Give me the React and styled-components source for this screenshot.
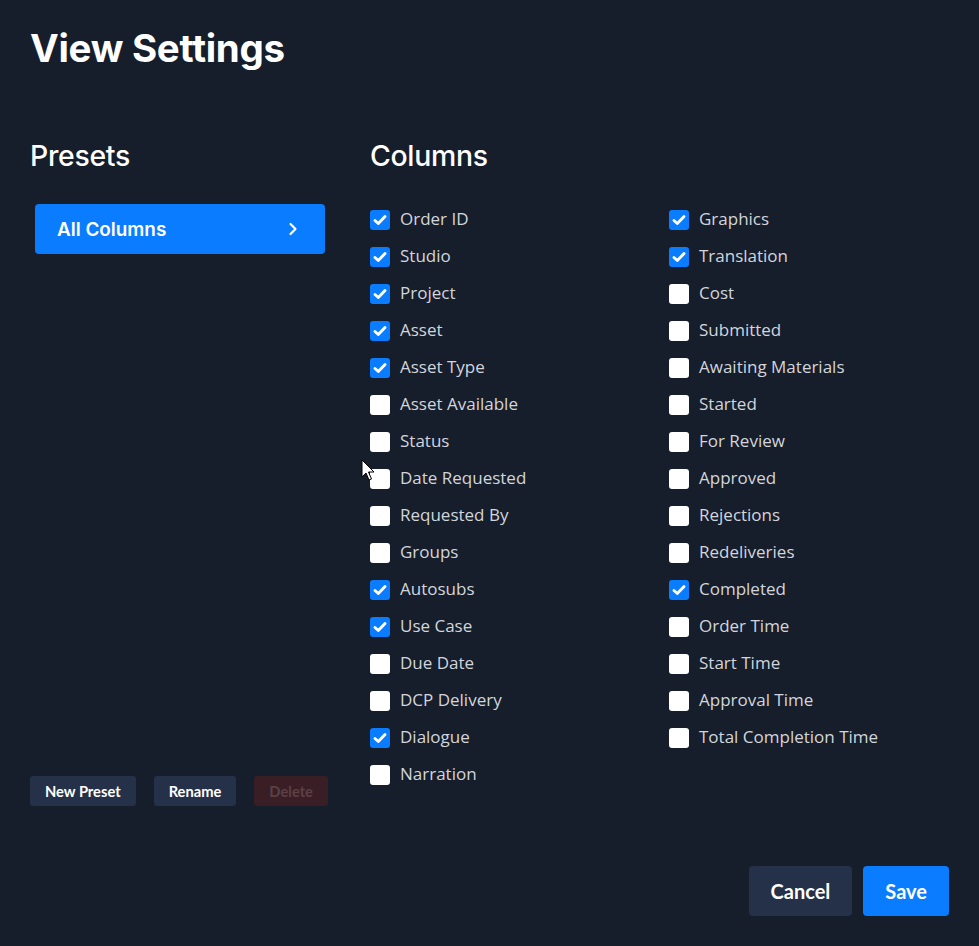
import React from "react"
import styled, { createGlobalStyle } from "styled-components"
import { ChevronRight } from "lucide-react"

const GlobalStyle = createGlobalStyle`
  html, body {
    margin: 0;
    padding: 0;
    background: #161d2b;
  }
  body {
    font-family: "Open Sans", "Noto Sans", sans-serif;
    color: #ffffff;
  }
`

const columnsA = [
  ["Order ID", true],
  ["Studio", true],
  ["Project", true],
  ["Asset", true],
  ["Asset Type", true],
  ["Asset Available", false],
  ["Status", false],
  ["Date Requested", false],
  ["Requested By", false],
  ["Groups", false],
  ["Autosubs", true],
  ["Use Case", true],
  ["Due Date", false],
  ["DCP Delivery", false],
  ["Dialogue", true],
  ["Narration", false],
]

const columnsB = [
  ["Graphics", true],
  ["Translation", true],
  ["Cost", false],
  ["Submitted", false],
  ["Awaiting Materials", false],
  ["Started", false],
  ["For Review", false],
  ["Approved", false],
  ["Rejections", false],
  ["Redeliveries", false],
  ["Completed", true],
  ["Order Time", false],
  ["Start Time", false],
  ["Approval Time", false],
  ["Total Completion Time", false],
]

const Page = styled.div`
  position: relative;
  width: 979px;
  height: 946px;
  box-sizing: border-box;
  padding: 24px 30px 0 30px;
  background: #161d2b;
  overflow: hidden;
`

const Title = styled.h1`
  margin: 0;
  font-family: Inter, "Noto Sans", sans-serif;
  font-weight: 700;
  font-size: 38.5px;
  line-height: 48px;
  letter-spacing: -0.3px;
  color: #ffffff;
`

const Body = styled.div`
  display: grid;
  grid-template-columns: 300px 1fr;
  gap: 40px;
  margin-top: 64px;
`

const Heading = styled.h2`
  margin: 0 0 24px 0;
  font-family: Inter, "Noto Sans", sans-serif;
  font-weight: 500;
  font-size: 28.4px;
  line-height: 40px;
  letter-spacing: -0.3px;
  color: #ffffff;
`

const PresetPanel = styled.section`
  display: flex;
  flex-direction: column;
`

const PresetItem = styled.button`
  display: flex;
  align-items: center;
  justify-content: space-between;
  margin: 4px 5px 0 5px;
  height: 50px;
  padding: 0 22px;
  border: 0;
  border-radius: 4px;
  background: ${p => (p.active ? "#0a7cff" : "transparent")};
  color: #ffffff;
  font-family: Inter, "Noto Sans", sans-serif;
  font-weight: 600;
  font-size: 18.9px;
  cursor: pointer;
`

const PresetActions = styled.div`
  display: flex;
  gap: 18px;
  margin-top: auto;
  margin-bottom: -14px;
`

const SmallButton = styled.button`
  height: 30px;
  padding: 0 15px;
  border: 0;
  border-radius: 3px;
  white-space: nowrap;
  background: ${p => (p.danger ? "#3a1e25" : "#253149")};
  color: ${p => (p.danger ? "#5b4046" : "#ffffff")};
  font-family: Lato, "Noto Sans", sans-serif;
  font-weight: 700;
  font-size: 14.7px;
`

const ColumnsPanel = styled.section``

const ColumnGrid = styled.div`
  display: grid;
  grid-template-columns: 299px 1fr;
  grid-template-rows: repeat(16, 37px);
  grid-auto-flow: column;
`

const CheckRow = styled.label`
  display: flex;
  align-items: center;
  gap: 10px;
  height: 37px;
  color: #d2d6dc;
  font-family: "Open Sans", "Noto Sans", sans-serif;
  font-size: 17px;
  cursor: pointer;
`

const Box = styled.span`
  display: inline-flex;
  align-items: center;
  justify-content: center;
  width: 20px;
  height: 20px;
  flex: none;
  border-radius: 3px;
  background: ${p => (p.checked ? "#0a7cff" : "#ffffff")};
  margin-top: 2px;
`

const Footer = styled.div`
  display: flex;
  justify-content: flex-end;
  gap: 11px;
  margin-top: 74px;
`

const FooterButton = styled.button`
  height: 50px;
  padding: 0 22px;
  border: 0;
  border-radius: 4px;
  background: ${p => (p.primary ? "#0a7cff" : "#253149")};
  color: #ffffff;
  font-family: Lato, "Noto Sans", sans-serif;
  font-weight: 700;
  font-size: 20px;
`

const Pointer = styled.svg`
  position: absolute;
  left: 361px;
  top: 459px;
  pointer-events: none;
`

const Check = ({ checked }) => (
  <Box checked={checked}>
    {checked && (
      <svg width="16" height="16" viewBox="0 0 14 14">
        <path
          d="M2.6 7.4 L5.5 10.1 L11.4 3.9"
          fill="none"
          stroke="#ffffff"
          strokeWidth="2.5"
          strokeLinecap="round"
          strokeLinejoin="round"
        />
      </svg>
    )}
  </Box>
)

const App = () => {
  const items = [...columnsA, ...columnsB]
  return (
    <>
      <GlobalStyle />
      <Page>
        <Title>View Settings</Title>
        <Body>
          <PresetPanel>
            <Heading>Presets</Heading>
            <PresetItem active>
              <span>All Columns</span>
              <ChevronRight size={20} strokeWidth={2.6} />
            </PresetItem>
            <PresetActions>
              <SmallButton>New Preset</SmallButton>
              <SmallButton>Rename</SmallButton>
              <SmallButton danger disabled>
                Delete
              </SmallButton>
            </PresetActions>
          </PresetPanel>
          <ColumnsPanel>
            <Heading>Columns</Heading>
            <ColumnGrid>
              {items.map(([label, checked]) => (
                <CheckRow key={label}>
                  <Check checked={checked} />
                  {label}
                </CheckRow>
              ))}
            </ColumnGrid>
          </ColumnsPanel>
        </Body>
        <Footer>
          <FooterButton>Cancel</FooterButton>
          <FooterButton primary>Save</FooterButton>
        </Footer>
        <Pointer width="14" height="24" viewBox="0 0 14 24">
          <path
            d="M1 1 L1 18 L5 14 L8 21 L10.5 20 L7.5 13 L13 13 Z"
            fill="#ffffff"
            stroke="#000000"
            strokeWidth="1"
            strokeLinejoin="round"
          />
        </Pointer>
      </Page>
    </>
  )
}

export default App
